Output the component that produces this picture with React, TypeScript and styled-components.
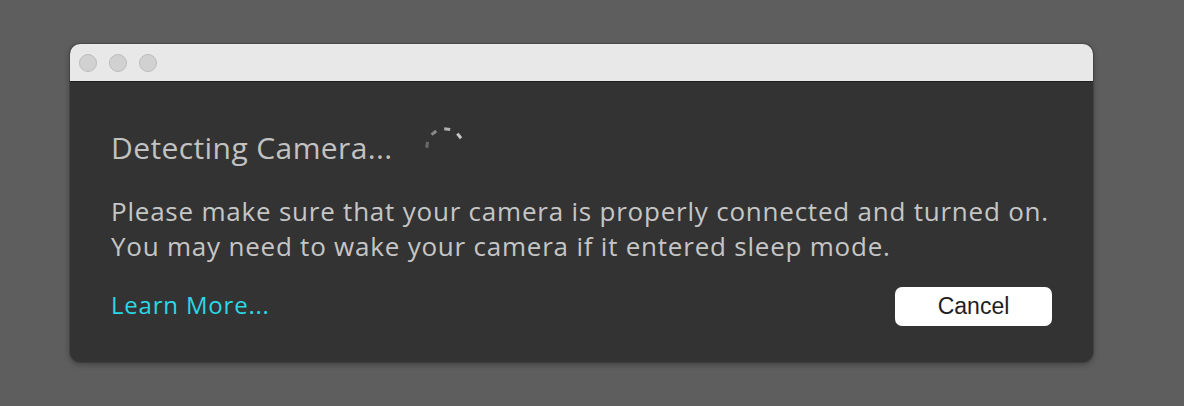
import React from 'react'
import styled, { createGlobalStyle } from 'styled-components'

const GlobalStyle = createGlobalStyle`
  html, body {
    margin: 0;
    padding: 0;
    background: #5e5e5e;
  }
  body {
    font-family: 'Open Sans', 'Liberation Sans', sans-serif;
  }
`

const Page = styled.div`
  width: 1184px;
  height: 406px;
  padding: 44px 0 0 70px;
  box-sizing: border-box;
`

const Window = styled.div`
  width: 1023px;
  height: 318px;
  border-radius: 10px;
  overflow: hidden;
  background: #333333;
  box-shadow: 0 2px 6px rgba(0, 0, 0, 0.35), 0 0 0 1px rgba(0, 0, 0, 0.15);
  display: flex;
  flex-direction: column;
`

const TitleBar = styled.div`
  height: 37px;
  background: #e8e8e8;
  border-bottom: 1px solid #1f1f1f;
  display: flex;
  align-items: center;
  gap: 12px;
  padding-left: 9px;
`

const Light = styled.span`
  width: 16px;
  height: 16px;
  border-radius: 50%;
  background: #d1d1d1;
  border: 1px solid #bcbcbc;
`

const Body = styled.div`
  flex: 1;
  padding: 40px 41px 0 41px;
  display: flex;
  flex-direction: column;
`

const Heading = styled.div`
  display: flex;
  align-items: center;
  gap: 30px;
  height: 50px;
`

const Title = styled.h2`
  margin: 0;
  font-size: 30px;
  font-weight: 400;
  color: #c2c2c2;
  letter-spacing: 0.4px;
`

const Message = styled.p`
  margin: 22px 0 0;
  font-size: 26px;
  line-height: 35px;
  letter-spacing: 0.78px;
  color: #c6c6c6;
`

const Footer = styled.div`
  margin-top: 23px;
  display: flex;
  justify-content: space-between;
  align-items: center;
`

const LearnMore = styled.a`
  font-size: 24px;
  line-height: 32px;
  letter-spacing: 0.8px;
  color: #2ad8e6;
  text-decoration: none;
  margin-top: -4px;
`

const CancelButton = styled.button`
  width: 157px;
  height: 39px;
  border: none;
  border-radius: 7px;
  background: #ffffff;
  color: #1e1e1e;
  font-family: 'Liberation Sans', 'Open Sans', sans-serif;
  font-size: 23px;
`

function Spinner() {
  const ticks = [
    { a: 187, o: 0.35 },
    { a: 232, o: 0.55 },
    { a: 277, o: 0.8 },
    { a: 322, o: 0.95 },
  ]
  return (
    <svg width="44" height="44" viewBox="-22 -22 44 44">
      {ticks.map((t) => (
        <rect
          key={t.a}
          x="16.5"
          y="-3"
          width="3"
          height="6"
          fill="#d0d0d0"
          opacity={t.o}
          transform={`rotate(${t.a})`}
        />
      ))}
    </svg>
  )
}

export default function App() {
  return (
    <Page>
      <GlobalStyle />
      <Window>
        <TitleBar>
          <Light />
          <Light />
          <Light />
        </TitleBar>
        <Body>
          <Heading>
            <Title>Detecting Camera...</Title>
            <Spinner />
          </Heading>
          <Message>
            Please make sure that your camera is properly connected and turned on.
            <br />
            You may need to wake your camera if it entered sleep mode.
          </Message>
          <Footer>
            <LearnMore href="#">Learn More...</LearnMore>
            <CancelButton>Cancel</CancelButton>
          </Footer>
        </Body>
      </Window>
    </Page>
  )
}
